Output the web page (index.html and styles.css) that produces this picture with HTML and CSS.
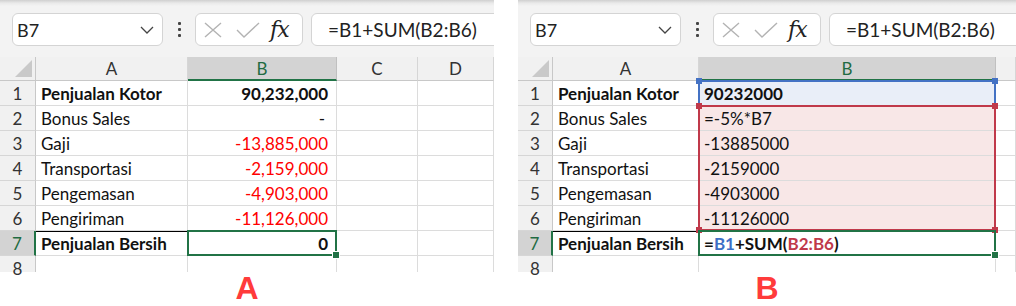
FILE: index.html
```html
<!DOCTYPE html>
<html>
<head>
<meta charset="utf-8">
<link rel="stylesheet" href="styles.css">
</head>
<body>
<div class="page">
  <section class="panel panel-a">
    <div class="fbar">
      <div class="namebox"><span>B7</span>
        <svg class="chev" width="14" height="8" viewBox="0 0 14 8"><path d="M1 1 L7 7 L13 1" fill="none" stroke="#444" stroke-width="1.3"/></svg>
      </div>
      <div class="dots"><i></i><i></i><i></i></div>
      <div class="fxbox">
        <svg width="20" height="16" viewBox="0 0 20 16"><path d="M2 1 L18 15 M18 1 L2 15" stroke="#b3b3b3" stroke-width="1.4"/></svg>
        <svg width="24" height="16" viewBox="0 0 24 16"><path d="M1 8 L8 15 L23 1" fill="none" stroke="#b3b3b3" stroke-width="1.4"/></svg>
        <span class="fx">fx</span>
      </div>
      <div class="formula">=B1+SUM(B2:B6)</div>
    </div>
    <div class="sheet sheet-a">
      <div class="corner"><span class="tri"></span></div>
      <div class="ch">A</div><div class="ch sel">B</div><div class="ch">C</div><div class="ch">D</div>

      <div class="rh">1</div><div class="c b">Penjualan Kotor</div><div class="c b r">90,232,000</div><div class="c"></div><div class="c"></div>
      <div class="rh">2</div><div class="c">Bonus Sales</div><div class="c r dash">-</div><div class="c"></div><div class="c"></div>
      <div class="rh">3</div><div class="c">Gaji</div><div class="c r neg">-13,885,000</div><div class="c"></div><div class="c"></div>
      <div class="rh">4</div><div class="c">Transportasi</div><div class="c r neg">-2,159,000</div><div class="c"></div><div class="c"></div>
      <div class="rh">5</div><div class="c">Pengemasan</div><div class="c r neg">-4,903,000</div><div class="c"></div><div class="c"></div>
      <div class="rh">6</div><div class="c">Pengiriman</div><div class="c r neg">-11,126,000</div><div class="c"></div><div class="c"></div>
      <div class="rh sel">7</div><div class="c b topline">Penjualan Bersih</div><div class="c b r active">0<span class="selbox green"><span class="handle"></span></span></div><div class="c"></div><div class="c"></div>
      <div class="rh last">8</div><div class="c last"></div><div class="c last"></div><div class="c last"></div><div class="c last"></div>
    </div>
    <div class="label">A</div>
  </section>

  <section class="panel panel-b">
    <div class="fbar">
      <div class="namebox"><span>B7</span>
        <svg class="chev" width="14" height="8" viewBox="0 0 14 8"><path d="M1 1 L7 7 L13 1" fill="none" stroke="#444" stroke-width="1.3"/></svg>
      </div>
      <div class="dots"><i></i><i></i><i></i></div>
      <div class="fxbox">
        <svg width="20" height="16" viewBox="0 0 20 16"><path d="M2 1 L18 15 M18 1 L2 15" stroke="#b3b3b3" stroke-width="1.4"/></svg>
        <svg width="24" height="16" viewBox="0 0 24 16"><path d="M1 8 L8 15 L23 1" fill="none" stroke="#b3b3b3" stroke-width="1.4"/></svg>
        <span class="fx">fx</span>
      </div>
      <div class="formula">=B1+SUM(B2:B6)</div>
    </div>
    <div class="sheet sheet-b">
      <div class="corner"><span class="tri"></span></div>
      <div class="ch">A</div><div class="ch sel">B</div><div class="ch"></div>

      <div class="rh">1</div><div class="c b">Penjualan Kotor</div><div class="c b blue-fill">90232000<span class="selbox blue"><i class="sq tl"></i><i class="sq tr"></i></span></div><div class="c"></div>
      <div class="rh">2</div><div class="c">Bonus Sales</div><div class="c red-fill">=-5%*B7<span class="selbox red"><i class="sq tl"></i><i class="sq tr"></i><i class="sq bl"></i><i class="sq br"></i></span></div><div class="c"></div>
      <div class="rh">3</div><div class="c">Gaji</div><div class="c red-fill">-13885000</div><div class="c"></div>
      <div class="rh">4</div><div class="c">Transportasi</div><div class="c red-fill">-2159000</div><div class="c"></div>
      <div class="rh">5</div><div class="c">Pengemasan</div><div class="c red-fill">-4903000</div><div class="c"></div>
      <div class="rh">6</div><div class="c">Pengiriman</div><div class="c red-fill">-11126000</div><div class="c"></div>
      <div class="rh sel">7</div><div class="c b topline">Penjualan Bersih</div><div class="c b active">=<span class="ref-blue">B1</span>+SUM(<span class="ref-red">B2:B6</span>)<span class="selbox green"><span class="handle"></span></span></div><div class="c"></div>
      <div class="rh last">8</div><div class="c last"></div><div class="c last"></div><div class="c last"></div>
    </div>
    <div class="label">B</div>
  </section>
</div>
</body>
</html>
```

FILE: styles.css
```css
* { box-sizing: border-box; }
html, body { margin: 0; padding: 0; background: #fff; }
body { font-family: "Lato", "Noto Sans", sans-serif; color: #111; width: 1016px; height: 306px; overflow: hidden; }

.page { display: flex; gap: 24px; }
.panel { overflow: hidden; display: flex; flex-direction: column; }
.panel-a { width: 494px; }
.panel-b { width: 498px; }

.fbar {
  height: 57px;
  display: flex;
  align-items: flex-start;
  padding: 13px 0 0 12px;
  background: linear-gradient(#cfcfcf 0px, #e9e9e9 3px, #f3f3f3 6px, #f3f3f3 100%);
}
.namebox {
  width: 151px; height: 33px;
  background: #fff; border: 1px solid #d4d4d4; border-radius: 6px;
  display: flex; align-items: center; justify-content: space-between;
  padding: 0 8px 0 4px;
  font-size: 18px; color: #222;
}
.chev { margin-top: 1px; }
.dots { width: 32px; height: 33px; display: flex; flex-direction: column; align-items: center; justify-content: center; gap: 3px; }
.dots i { display: block; width: 3px; height: 3px; background: #444; border-radius: 1px; }
.fxbox {
  width: 108px; height: 33px;
  background: #fff; border: 1px solid #d4d4d4; border-radius: 6px;
  display: flex; align-items: center; gap: 13px;
  padding: 0 0 0 7px;
}
.fxbox svg { display: block; }
.fx { font-family: "DejaVu Serif", "Liberation Serif", serif; font-style: italic; font-size: 22px; color: #222; margin-left: -3px; letter-spacing: -1px; }
.formula {
  flex: 1; margin-left: 8px; margin-right: -12px; height: 33px;
  background: #fff; border: 1px solid #d4d4d4; border-radius: 6px;
  padding-left: 16px; font-size: 19px; line-height: 31px; color: #222;
}

.sheet { display: grid; grid-template-rows: 24px repeat(7, 25px) 16px; }
.sheet-a { grid-template-columns: 36px 152px 149px 81px 76px; }
.sheet-b { grid-template-columns: 35px 146px 297px 20px; }

.corner { background: #f1f1f1; border-right: 1px solid #c8c8c8; border-bottom: 1px solid #c8c8c8; position: relative; }
.tri { position: absolute; right: 3px; bottom: 3px; width: 0; height: 0; border-left: 17px solid transparent; border-bottom: 17px solid #c9c9c9; }
.ch {
  background: #f1f1f1; border-right: 1px solid #d6d6d6; border-bottom: 1px solid #c8c8c8;
  text-align: center; font-size: 17px; line-height: 23px; color: #333;
}
.ch.sel { background: #d3d3d3; color: #1f6b42; border-bottom: 2px solid #217346; border-right-color: #c0c0c0; }
.rh {
  background: #f1f1f1; border-right: 1px solid #c8c8c8; border-bottom: 1px solid #d6d6d6;
  text-align: center; font-size: 17px; line-height: 25px; color: #333;
}
.rh.sel { background: #d3d3d3; color: #1f6b42; border-right: 2px solid #217346; }
.rh.last, .c.last { border-bottom: none; }

.c {
  border-right: 1px solid #dcdcdc; border-bottom: 1px solid #dcdcdc;
  font-size: 17px; line-height: 26px; padding: 0 5px; white-space: nowrap; position: relative; color: #111;
}
.c.b { font-weight: 700; }
.c.r { text-align: right; padding-right: 8px; }
.c.dash { padding-right: 11px; }
.c.neg { color: #ff0000; }
.c.topline { border-top: 1px solid #000; line-height: 24px; }

.blue-fill { background: #e9eef8; }
.red-fill { background: #f8e7e7; }
.ref-blue { color: #3d6fc6; }
.ref-red { color: #c0394a; }

.selbox { position: absolute; left: -1px; top: -1px; right: -1px; bottom: -1px; pointer-events: none; z-index: 2; }
.selbox.green { border: 2px solid #217346; }
.selbox.blue { border: 2px solid #4472c4; top: -1px; bottom: 0; border-bottom: none; }
.selbox.red { border: 2px solid #c0394a; top: -1px; bottom: -101px; }
.handle { position: absolute; right: -5px; bottom: -5px; width: 8px; height: 8px; background: #217346; border: 1px solid #fff; }
.sq { position: absolute; width: 6px; height: 6px; }
.blue .sq { background: #4472c4; }
.red .sq { background: #c0394a; }
.sq.tl { left: -4px; top: -4px; }
.sq.tr { right: -4px; top: -4px; }
.sq.bl { left: -4px; bottom: -4px; }
.sq.br { right: -4px; bottom: -4px; }

.label {
  height: 33px; text-align: center;
  font-family: "Liberation Sans", Arial, sans-serif; font-weight: 700; font-size: 32px; line-height: 33px;
  color: #ff3b3b;
}
```
